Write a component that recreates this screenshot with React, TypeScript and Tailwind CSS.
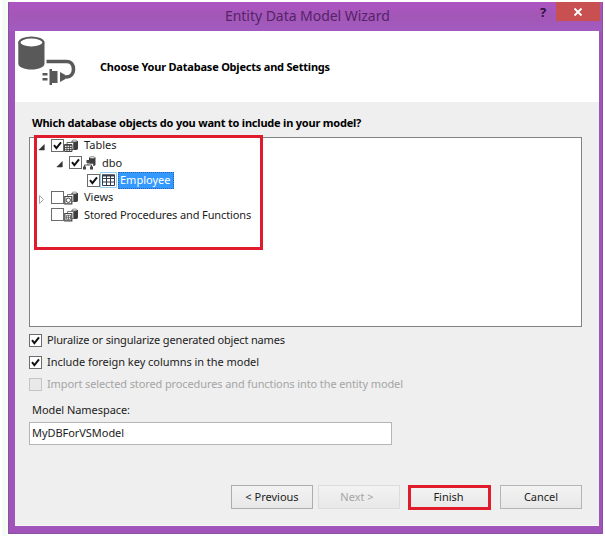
import type { ReactNode } from "react";

function Check({ on = false, disabled = false }: { on?: boolean; disabled?: boolean }) {
  return (
    <span className={`flex h-[13px] w-[13px] shrink-0 items-center justify-center border ${disabled ? "border-[#c4c4c4] bg-[#e9e9e9]" : "border-[#6c6c6c] bg-white"}`}>
      {on && (
        <svg width="11" height="11" viewBox="0 0 11 11" className="shrink-0">
          <path d="M2 5.2 4.4 8.2 9 2.4" fill="none" stroke="#111" strokeWidth="2" />
        </svg>
      )}
    </span>
  );
}

function Arrow({ open }: { open: boolean }) {
  return (
    <svg width="8" height="10" viewBox="0 0 8 10" className="shrink-0">
      {open ? <path d="M6.3 2.500V8H.8Z" fill="#333" stroke="#333" strokeWidth=".5" /> : <path d="M1.500 1.500 5.500 5.500l-4 4Z" fill="#fff" stroke="#a6a6a6" />}
    </svg>
  );
}

function MiniCylinder() {
  return (
    <>
      <path d="M7.500 2v7.500c0 1 1.300 1.500 3.200 1.500s3.300-.5 3.300-1.500V2Z" fill="#3d3d3d" />
      <ellipse cx="10.500" cy="2" rx="2.600" ry="1" fill="#eee" stroke="#555" strokeWidth=".6" />
    </>
  );
}

function TablesIcon() {
  return (
    <svg width="16" height="14" viewBox="0 0 16 14" className="shrink-0">
      <MiniCylinder />
      <path d="M3 3.500h6.500v7H3z" fill="#fff" stroke="#666" />
      <path d="M.5 5.500h7.500v7H.5z" fill="#eee" stroke="#444" />
      <path d="M.5 6.300H8M.5 8.500H8M.5 10.600H8M3 6v6.500M5.600 6v6.500" stroke="#444" strokeWidth=".9" />
    </svg>
  );
}

function SchemaIcon() {
  return (
    <svg width="16" height="14" viewBox="0 0 16 14" className="shrink-0">
      <path d="M7 1.500v7c0 1 1.300 1.500 3.300 1.500s3.200-.5 3.200-1.500v-7Z" fill="#3d3d3d" />
      <ellipse cx="10.300" cy="1.600" rx="2.700" ry="1" fill="#eee" stroke="#555" strokeWidth=".6" />
      <path d="M6 6v3M2 11V9h8v2" fill="none" stroke="#fff" strokeWidth="2.400" />
      <path d="M6 6v3M2.500 11V9h7v2" fill="none" stroke="#555" />
      <path d="M4.500 4h3v3h-3zM1 10.500h3v3H1zM8 10.500h3v3H8z" fill="#444" />
    </svg>
  );
}

function ViewsIcon({ grid = false }: { grid?: boolean }) {
  return (
    <svg width="16" height="14" viewBox="0 0 16 14" className="shrink-0">
      <MiniCylinder />
      <path d="M3.500 3.500h6v7h-6z" fill="#fff" stroke="#777" />
      <path d="M.8 5.500h7v7.300h-7z" fill="#fff" stroke="#444" strokeWidth="1.200" />
      {grid ? (
        <path d="M2.300 7.300h4.200v4H2.300zM4.400 7v5M2 9.300h5" fill="none" stroke="#555" strokeWidth=".8" />
      ) : (
        <circle cx="4.300" cy="9.200" r="2.200" fill="#fff" stroke="#444" />
      )}
    </svg>
  );
}

function TableIcon() {
  return (
    <svg width="17" height="16" viewBox="0 0 17 16" className="shrink-0">
      <path d="M.5.5h16v15H.5z" fill="#fff" stroke="#91cdf0" />
      <path d="M2.500 3h12v10.500h-12zM2.500 6.500h12M2.500 10h12M6.500 3v10M10.500 3v10" fill="none" stroke="#333b48" />
      <path d="M2 3.500h13" stroke="#333b48" strokeWidth="2" />
    </svg>
  );
}

function DatabaseLogo() {
  return (
    <svg width="60" height="50" viewBox="0 0 60 50" className="shrink-0">
      <path d="M1.300 5.500v22c0 3.500 5.600 6 13.200 6s13-2.500 13-6v-22Z" fill="#595959" />
      <ellipse cx="14.400" cy="6.500" rx="12" ry="5" fill="#fff" stroke="#595959" strokeWidth="2" />
      <path d="M29.500 25.500H49.500c5 0 7 3.500 7 7.700s-2.500 7.800-7.500 7.800H46" fill="none" stroke="#595959" strokeWidth="3.600" />
      <path d="M25.500 37h5v2.500h-5zM25.500 42h5v2.500h-5zM32.500 33H35v2h5.500v12H35V49h-2.500ZM43 36l5 2.800v4.400L43 46Z" fill="#595959" />
    </svg>
  );
}

function TreeRow({ indent, arrow, on, icon, children }: { indent: string; arrow?: "open" | "closed"; on?: boolean; icon: ReactNode; children: ReactNode }) {
  return (
    <div className={`flex h-[17.300px] items-center ${indent}`}>
      <span className="flex w-[13px] shrink-0 pt-[2px]">{arrow && <Arrow open={arrow === "open"} />}</span>
      <Check on={on} />
      {icon}
      {children}
    </div>
  );
}

function Option({ label, on, disabled, tracking }: { label: string; on?: boolean; disabled?: boolean; tracking: string }) {
  return (
    <div className={`flex h-[22px] items-center gap-[5px] ${disabled ? "text-[#a5a5a5]" : ""}`}>
      <Check on={on} disabled={disabled} />
      <span className={tracking}>{label}</span>
    </div>
  );
}

export default function App() {
  const button = "flex h-[24px] w-[82px] items-center justify-center border bg-linear-to-b from-[#f3f3f3] to-[#e8e8e8] pt-px";
  return (
    <div className="h-[536px] w-[605px] overflow-hidden bg-linear-to-r from-white from-[2px] via-[#f1faf1] via-[3px] to-white to-[9px] pt-[2px] pl-[8px] font-['Noto_Sans',sans-serif] text-[11px] whitespace-nowrap text-[#1c1c1c]">
      <div className="flex h-[532px] w-[595px] flex-col border-x border-b border-[#8952a0] bg-[#a053b9]">
        <header className="flex h-[29px] shrink-0 bg-linear-to-b from-[#ad55c3] via-[#a357b6] to-[#a25bc1]">
          <h1 className="flex-1 pt-[4px] pl-[216px] text-[14px] leading-[20px] tracking-[-0.04px] text-[#54236a]">Entity Data Model Wizard</h1>
          <span className="w-[16px] pt-px text-[13px] leading-[18px] font-bold text-[#2b123b]">?</span>
          <span className="mr-[2px] flex h-[19px] w-[44px] items-center justify-center bg-[#c85050]">
            <svg width="10" height="10" viewBox="0 0 10 10">
              <path d="m1.500 1.500 7 7m0-7-7 7" stroke="#fff" strokeWidth="1.800" />
            </svg>
          </span>
        </header>
        <main className="mr-[3px] ml-[6px] flex h-[495px] flex-col border-b border-[#f8f4fa] bg-[#efefef]">
          <div className="flex h-[71px] shrink-0 bg-white pt-[5px] pl-[2px]">
            <DatabaseLogo />
            <h2 className="pt-[23px] pl-[23px] text-[11px] leading-[16px] font-bold tracking-[-0.21px] text-black">Choose Your Database Objects and Settings</h2>
          </div>
          <div className="flex flex-1 flex-col pr-[17px] pl-[14px]">
            <h3 className="h-[35px] pt-[13px] pl-[3px] text-[11px] leading-[16px] font-bold tracking-[-0.21px] text-black">Which database objects do you want to include in your model?</h3>
            <section className="relative h-[190px] w-[553px] shrink-0 border border-[#828282] bg-white">
              <div className="-mt-[1px]">
                <TreeRow indent="pl-[8px]" arrow="open" on icon={<TablesIcon />}><span className="pl-[4px]">Tables</span></TreeRow>
                <TreeRow indent="pl-[26px]" arrow="open" on icon={<SchemaIcon />}><span className="pl-[4px]">dbo</span></TreeRow>
                <TreeRow indent="pl-[44px]" on icon={<TableIcon />}>
                  <span className="ml-px h-[17px] w-[56px] border border-dotted border-[#285fa5] bg-[#3399ff] pl-px leading-[14px] text-white">Employee</span>
                </TreeRow>
                <TreeRow indent="pl-[8px]" arrow="closed" icon={<ViewsIcon />}><span className="pl-[4px]">Views</span></TreeRow>
                <TreeRow indent="pl-[8px]" icon={<ViewsIcon grid />}><span className="pl-[4px] tracking-[-0.12px]">Stored Procedures and Functions</span></TreeRow>
              </div>
              <div className="absolute top-[-3px] left-[4px] h-[115px] w-[229px] border-[3px] border-[#e01b2b]" />
            </section>
            <div className="pt-[2px]">
              <Option on label="Pluralize or singularize generated object names" tracking="tracking-[-0.16px]" />
              <Option on label="Include foreign key columns in the model" tracking="tracking-[-0.04px]" />
              <Option disabled label="Import selected stored procedures and functions into the entity model" tracking="tracking-[-0.11px]" />
            </div>
            <label className="pt-[7px] pl-[3px] leading-[16px] tracking-[-0.06px]">Model Namespace:</label>
            <div className="mt-[4px] flex h-[23px] w-[363px] shrink-0 items-center border border-[#b5b5b5] bg-white pl-[2px] tracking-[-0.05px]">MyDBForVSModel</div>
            <footer className="mt-[40px] flex items-start pl-[202px]">
              <button className={`${button} border-[#adadad]`}>&lt; Previous</button>
              <button className={`${button} ml-[5px] border-[#dcdcdc] pr-[4px] text-[#a5a5a5]`}>Next &gt;</button>
              <button className="ml-[8px] flex h-[25px] w-[83px] items-center justify-center border-[3px] border-[#e01b2b] bg-linear-to-b from-[#f3f3f3] to-[#e8e8e8] pr-[2px]">Finish</button>
              <button className={`${button} ml-[9px] border-[#b5b5b5]`}>Cancel</button>
            </footer>
          </div>
        </main>
      </div>
    </div>
  );
}
